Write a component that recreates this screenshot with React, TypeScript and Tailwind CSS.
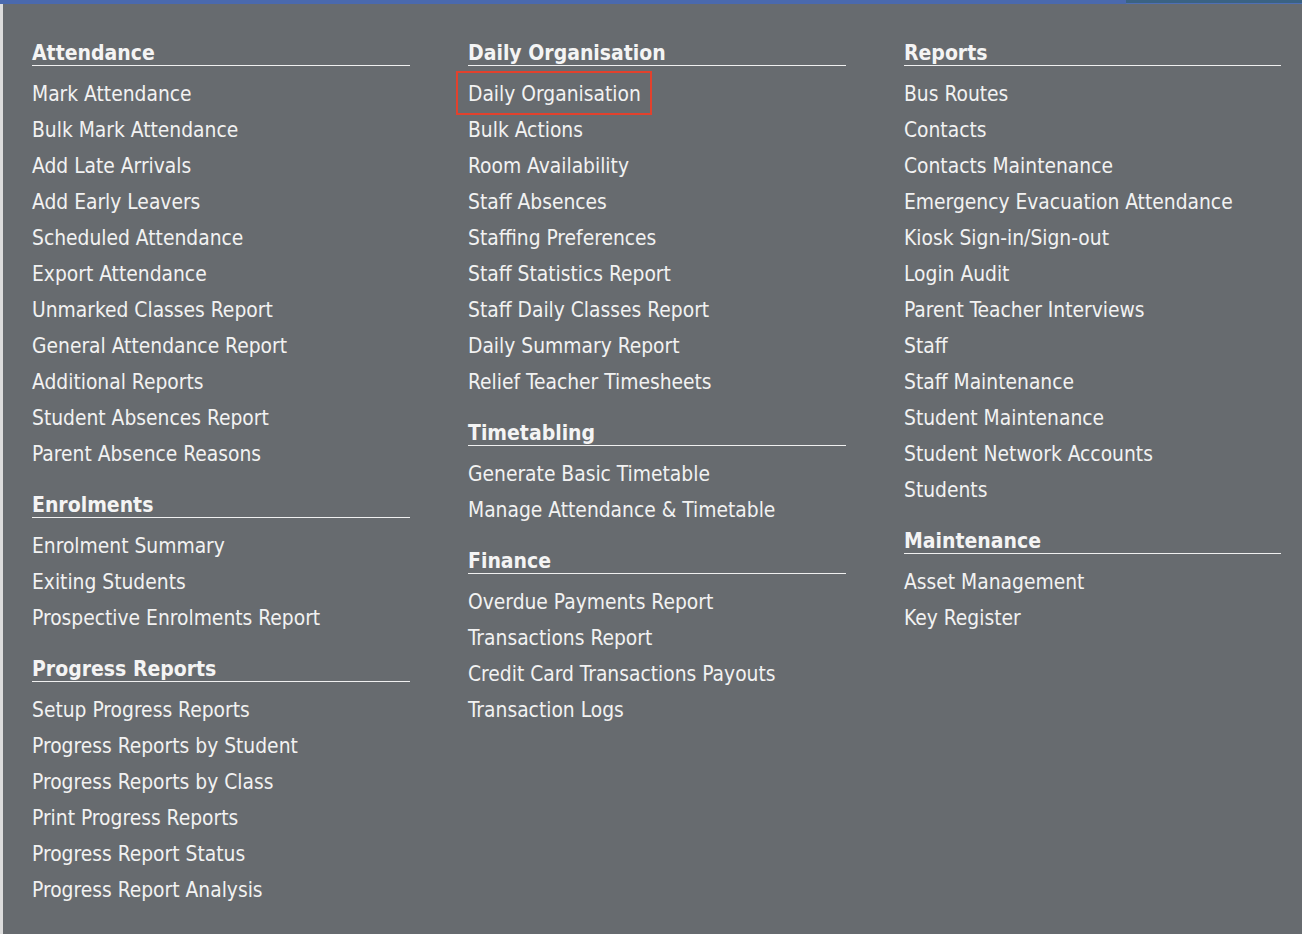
import React from "react";

type Section = { title: string; items: string[] };

const columns: Section[][] = [
  [
    {
      title: "Attendance",
      items: [
        "Mark Attendance",
        "Bulk Mark Attendance",
        "Add Late Arrivals",
        "Add Early Leavers",
        "Scheduled Attendance",
        "Export Attendance",
        "Unmarked Classes Report",
        "General Attendance Report",
        "Additional Reports",
        "Student Absences Report",
        "Parent Absence Reasons",
      ],
    },
    {
      title: "Enrolments",
      items: ["Enrolment Summary", "Exiting Students", "Prospective Enrolments Report"],
    },
    {
      title: "Progress Reports",
      items: [
        "Setup Progress Reports",
        "Progress Reports by Student",
        "Progress Reports by Class",
        "Print Progress Reports",
        "Progress Report Status",
        "Progress Report Analysis",
      ],
    },
  ],
  [
    {
      title: "Daily Organisation",
      items: [
        "Daily Organisation",
        "Bulk Actions",
        "Room Availability",
        "Staff Absences",
        "Staffing Preferences",
        "Staff Statistics Report",
        "Staff Daily Classes Report",
        "Daily Summary Report",
        "Relief Teacher Timesheets",
      ],
    },
    {
      title: "Timetabling",
      items: ["Generate Basic Timetable", "Manage Attendance & Timetable"],
    },
    {
      title: "Finance",
      items: [
        "Overdue Payments Report",
        "Transactions Report",
        "Credit Card Transactions Payouts",
        "Transaction Logs",
      ],
    },
  ],
  [
    {
      title: "Reports",
      items: [
        "Bus Routes",
        "Contacts",
        "Contacts Maintenance",
        "Emergency Evacuation Attendance",
        "Kiosk Sign-in/Sign-out",
        "Login Audit",
        "Parent Teacher Interviews",
        "Staff",
        "Staff Maintenance",
        "Student Maintenance",
        "Student Network Accounts",
        "Students",
      ],
    },
    {
      title: "Maintenance",
      items: ["Asset Management", "Key Register"],
    },
  ],
];

function MenuSection({ section, first }: { section: Section; first: boolean }) {
  return (
    <div className={first ? "" : "mt-[20px]"}>
      <h3 className="h-[26px] leading-[27px] text-[21px] font-bold text-[#f4f4f4] border-b border-[#f0f0f0] mb-[10px]">
        {section.title}
      </h3>
      <ul>
        {section.items.map((item) => (
          <li key={item} className="h-[36px] leading-[36px] text-[20.8px] text-[#f2f2f2]">
            {item === "Daily Organisation" && section.title === "Daily Organisation" ? (
              <span className="relative">
                {item}
                {/* highlight box */}
                <span className="absolute left-[-12px] right-[-11px] top-[-11px] bottom-[-9px] border-2 border-[#e2412d]" />
              </span>
            ) : (
              item
            )}
          </li>
        ))}
      </ul>
    </div>
  );
}

export default function App() {
  return (
    <div
      className="w-[1302px] h-[934px] flex flex-col overflow-hidden bg-[#676b6f]"
      style={{ fontFamily: '"DejaVu Sans Condensed", "DejaVu Sans", sans-serif' }}
    >
      {/* top app bar sliver */}
      <div className="h-[4px] flex shrink-0">
        <div className="w-[1126px] bg-[#4a69ad]" />
        <div className="flex-1 bg-[#3a6283] border-b border-[#4f6fb3]" />
      </div>

      <div className="flex flex-1">
        <div className="w-[3px] bg-[#dcdcdc]" />
        <div className="flex-1 bg-[#676b6f] pl-[29px] pt-[36px]">
          <div className="grid grid-cols-[378px_378px_377px] gap-x-[58px]">
            {columns.map((col, i) => (
              <div key={i}>
                {col.map((s, j) => (
                  <MenuSection key={s.title} section={s} first={j === 0} />
                ))}
              </div>
            ))}
          </div>
        </div>
      </div>
    </div>
  );
}
